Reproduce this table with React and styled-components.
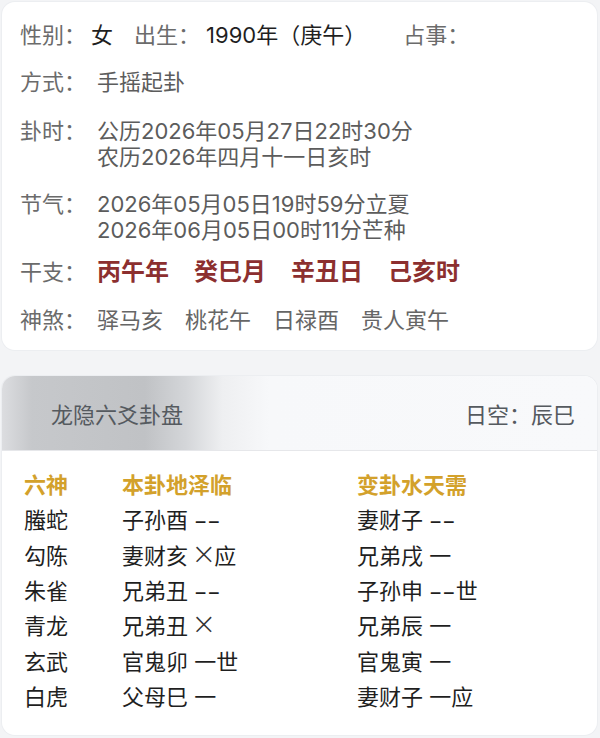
import React from "react";
import styled, { createGlobalStyle } from "styled-components";

const GlobalStyle = createGlobalStyle`
  html, body {
    margin: 0;
    padding: 0;
    background: #f3f4f6;
  }
  body {
    font-family: Inter, "Noto Sans CJK SC", sans-serif;
  }
`;

const Page = styled.div`
  width: 600px;
  height: 738px;
  padding: 2px 3px 3px 2px;
  box-sizing: border-box;
  display: flex;
  flex-direction: column;
  gap: 26px;
  overflow: hidden;
`;

const Card = styled.section`
  background: #fff;
  border-radius: 13px;
  box-shadow: 0 0 0 1px #eceef1;
  overflow: hidden;
`;

const InfoBody = styled.div`
  padding: 20px 18px 18px;
  display: flex;
  flex-direction: column;
  gap: 21px;
`;

const InfoRow = styled.div`
  display: flex;
  align-items: flex-start;
  line-height: ${p => p.$tall ? "28px" : "26px"};
  margin-top: ${p => p.$shift || 0}px;
`;

const Label = styled.span`
  flex-shrink: 0;
  width: ${p => p.$auto ? "auto" : "77px"};
  margin-right: ${p => p.$gap || 0}px;
  font-size: 22px;
  color: #6b6b6b;
`;

const Value = styled.span`
  font-size: 22px;
  color: ${p => p.$dark ? "#1f1f1f" : "#5c5c5c"};
  margin-right: ${p => p.$gap || 0}px;
  white-space: nowrap;
`;

const Lines = styled.div`
  display: flex;
  flex-direction: column;
  font-size: 22px;
  color: #5c5c5c;
`;

const Pillars = styled.div`
  display: flex;
  gap: 25px;
`;

const Pillar = styled.span`
  font-size: 24px;
  font-weight: 700;
  color: #8c2f2f;
`;

const Spirits = styled.div`
  display: flex;
  gap: 22px;
  font-size: 22px;
  color: #666;
`;

const PanelHeader = styled.header`
  height: 74px;
  display: flex;
  align-items: center;
  justify-content: space-between;
  padding: 0 22px 0 49px;
  background: linear-gradient(90deg, #dcdde0 0%, #c6c8cb 5%, #c0c2c5 24%, #d4d6d9 31%, #eeeff1 37%, #f7f8fa 45%, #f8f9fb 100%);
  border-bottom: 1px solid #e6e7ea;
  font-size: 22px;
  color: #555a5f;
`;

const Table = styled.div`
  display: grid;
  grid-template-columns: 98px 235px 1fr;
  grid-auto-rows: 35.3px;
  align-items: center;
  padding: 14px 0 23px 22px;
  font-size: 22px;
  color: #1f1f1f;
`;

const HeadCell = styled.span`
  font-weight: 700;
  color: #d3a12b;
  font-size: 22px;
`;

const Cell = styled.span`
  white-space: nowrap;
`;

const Dash = styled.span`
  font-family: "Liberation Sans", sans-serif;
  display: inline-block;
  transform: scaleX(1.8);
  transform-origin: left center;
  margin-right: 12px;
`;

const Cross = styled.span`
  font-family: "DejaVu Sans", sans-serif;
  font-size: 30px;
  font-weight: 200;
  line-height: 1;
  margin: 0 -2px 0 -3px;
  color: #333;
`;

const Yao = ({ text }) => {
  const parts = text.split(/(--|×)/);
  return parts.map((p, i) => {
    if (p === "--") return <Dash key={i}>--</Dash>;
    if (p === "×") return <Cross key={i}>×</Cross>;
    return <React.Fragment key={i}>{p}</React.Fragment>;
  });
};

const rows = [
  ["螣蛇", "子孙酉 --", "妻财子 --"],
  ["勾陈", "妻财亥 ×应", "兄弟戌 一"],
  ["朱雀", "兄弟丑 --", "子孙申 --世"],
  ["青龙", "兄弟丑 ×", "兄弟辰 一"],
  ["玄武", "官鬼卯 一世", "官鬼寅 一"],
  ["白虎", "父母巳 一", "妻财子 一应"],
];

export default function App() {
  return (
    <Page>
      <GlobalStyle />
      <Card>
        <InfoBody>
          <InfoRow>
            <Label $auto $gap={5}>性别：</Label>
            <Value $dark $gap={21}>女</Value>
            <Label $auto $gap={6}>出生：</Label>
            <Value $dark $gap={37}>1990年（庚午）</Value>
            <Label $auto>占事：</Label>
          </InfoRow>
          <InfoRow>
            <Label>方式：</Label>
            <Value>手摇起卦</Value>
          </InfoRow>
          <InfoRow $shift={2}>
            <Label>卦时：</Label>
            <Lines>
              <span>公历2026年05月27日22时30分</span>
              <span>农历2026年四月十一日亥时</span>
            </Lines>
          </InfoRow>
          <InfoRow>
            <Label>节气：</Label>
            <Lines>
              <span>2026年05月05日19时59分立夏</span>
              <span>2026年06月05日00时11分芒种</span>
            </Lines>
          </InfoRow>
          <InfoRow $tall $shift={-6}>
            <Label>干支：</Label>
            <Pillars>
              <Pillar>丙午年</Pillar>
              <Pillar>癸巳月</Pillar>
              <Pillar>辛丑日</Pillar>
              <Pillar>己亥时</Pillar>
            </Pillars>
          </InfoRow>
          <InfoRow>
            <Label>神煞：</Label>
            <Spirits>
              <span>驿马亥</span>
              <span>桃花午</span>
              <span>日禄酉</span>
              <span>贵人寅午</span>
            </Spirits>
          </InfoRow>
        </InfoBody>
      </Card>
      <Card>
        <PanelHeader>
          <span>龙隐六爻卦盘</span>
          <span>日空：辰巳</span>
        </PanelHeader>
        <Table>
          <HeadCell>六神</HeadCell>
          <HeadCell>本卦地泽临</HeadCell>
          <HeadCell>变卦水天需</HeadCell>
          {rows.map(r => (
            <React.Fragment key={r[0]}>
              <Cell>{r[0]}</Cell>
              <Cell><Yao text={r[1]} /></Cell>
              <Cell><Yao text={r[2]} /></Cell>
            </React.Fragment>
          ))}
        </Table>
      </Card>
    </Page>
  );
}
